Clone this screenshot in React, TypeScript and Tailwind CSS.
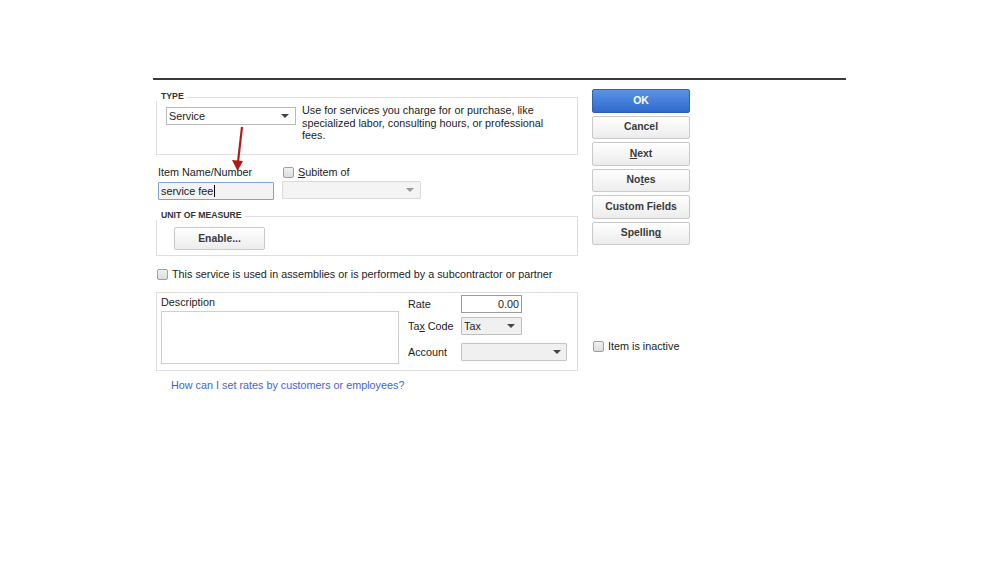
import React from "react";

const FONT = "font-['Liberation_Sans',Arial,sans-serif]";

function Checkbox() {
  return (
    <span className="inline-block h-[11px] w-[11px] shrink-0 rounded-[2px] border border-[#a0a0a0] bg-gradient-to-b from-[#f2f2f2] to-[#dcdcdc]" />
  );
}

function Caret({ color = "#444" }: { color?: string }) {
  return (
    <svg width="8" height="4" viewBox="0 0 8 4" className="shrink-0">
      <path d="M0 0 L8 0 L4 4 Z" fill={color} />
    </svg>
  );
}

function Button({
  children,
  primary,
}: {
  children: React.ReactNode;
  primary?: boolean;
}) {
  return (
    <div
      className={
        primary
          ? "flex h-[23.5px] w-[98px] items-center justify-center rounded-[2px] border border-[#2f5fb3] bg-gradient-to-b from-[#5b93e6] to-[#2f6acb] text-[10.4px] font-bold text-white"
          : "flex h-[23.5px] w-[98px] items-center justify-center rounded-[2px] border border-[#c9c9c9] bg-gradient-to-b from-[#ffffff] to-[#ececec] text-[10.4px] font-bold text-[#3a3a3a]"
      }
    >
      {children}
    </div>
  );
}

export default function App() {
  return (
    <div className={`relative h-[562px] w-[999px] bg-white text-[10.8px] text-[#222] ${FONT}`}>
      <div className="pl-[153px] pt-[78px]">
        <div className="h-[2px] w-[693px] bg-[#3a3a3a]" />

        <div className="flex">
          {/* left column */}
          <div className="ml-[3px] w-[422px]">
            {/* TYPE */}
            <div className="relative mt-[17px] h-[58px] border border-[#dedede] pl-[9px] pt-[9px]">
              <span className="absolute -left-[1px] -top-[7px] bg-white pl-[5px] pr-[3px] text-[8.7px] font-bold leading-[10px] text-[#333]">
                TYPE
              </span>
              <div className="flex">
                <div className="flex h-[18px] w-[130px] items-center justify-between border border-[#b9b9b9] bg-white pl-[2px] pr-[6px] leading-none">
                  <span>Service</span>
                  <Caret />
                </div>
                <p className="ml-[6px] mt-[-3px] leading-[12.5px]">
                  Use for services you charge for or purchase, like
                  <br />
                  specialized labor, consulting hours, or professional
                  <br />
                  fees.
                </p>
              </div>
            </div>

            {/* Item name / subitem */}
            <div className="ml-[2px] mt-[10px] flex gap-[8px]">
              <div className="w-[116px]">
                <div className="h-[14px] leading-[14px]">Item Name/Number</div>
                <div className="mt-[3px] flex h-[18px] items-center rounded-[1px] border border-[#7ea3d6] bg-[#f3f3f3] pl-[2px] leading-none">
                  <span>service fee</span>
                  <span className="ml-[1px] inline-block h-[12px] w-[1px] bg-black" />
                </div>
              </div>
              <div>
                <div className="flex h-[14px] items-center gap-[4px] pl-[1px] leading-[14px]">
                  <Checkbox />
                  <span>
                    <span className="underline">S</span>ubitem of
                  </span>
                </div>
                <div className="mt-[2px] flex h-[18px] w-[139px] items-center justify-end rounded-[1px] border border-[#dadada] bg-[#f4f4f4] pr-[6px]">
                  <Caret color="#9a9a9a" />
                </div>
              </div>
            </div>

            {/* UNIT OF MEASURE */}
            <div className="relative mt-[16px] h-[40px] border border-[#dedede] pl-[17px] pt-[10px]">
              <span className="absolute -left-[1px] -top-[7px] bg-white pl-[5px] pr-[3px] text-[8.7px] font-bold leading-[10px] text-[#333]">
                UNIT OF MEASURE
              </span>
              <div className="flex h-[23px] w-[91px] items-center justify-center rounded-[2px] border border-[#c9c9c9] bg-gradient-to-b from-[#ffffff] to-[#ececec] text-[10.4px] font-bold text-[#3a3a3a]">
                Enable...
              </div>
            </div>

            {/* assemblies checkbox */}
            <div className="ml-[1px] mt-[11px] flex h-[14px] items-center gap-[4px] leading-[14px]">
              <Checkbox />
              <span>
                This service is used in assemblies or is performed by a
                subcontractor or partner
              </span>
            </div>

            {/* description / rate box */}
            <div className="mt-[11px] flex h-[79px] border border-[#dedede] pl-[4px] pt-[2px]">
              <div className="w-[238px]">
                <div className="h-[14px] leading-[14px]">Description</div>
                <div className="mt-[2px] h-[53px] border border-[#cfcfcf] bg-white" />
              </div>
              <div className="ml-[9px]">
                <div className="flex h-[18px] items-center">
                  <span className="w-[53px]">Rate</span>
                  <div className="flex h-[18px] w-[61px] items-center justify-end border border-[#9c9c9c] bg-white pr-[2px] leading-none">
                    0.00
                  </div>
                </div>
                <div className="mt-[4px] flex h-[18px] items-center">
                  <span className="w-[53px]">
                    Ta<span className="underline">x</span> Code
                  </span>
                  <div className="flex h-[18px] w-[61px] items-center justify-between rounded-[1px] border border-[#bdbdbd] bg-[#f0f0f0] pl-[2px] pr-[6px] leading-none">
                    <span>Tax</span>
                    <Caret />
                  </div>
                </div>
                <div className="mt-[8px] flex h-[18px] items-center">
                  <span className="w-[53px]">Account</span>
                  <div className="flex h-[18px] w-[106px] items-center justify-end rounded-[1px] border border-[#c4c4c4] bg-[#f0f0f0] pr-[5px]">
                    <Caret />
                  </div>
                </div>
              </div>
            </div>

            <div className="ml-[15px] mt-[7px] h-[14px] leading-[14px] text-[#3f66c8]">
              How can I set rates by customers or employees?
            </div>
          </div>

          {/* right column */}
          <div className="ml-[14px] mt-[9px]">
            <div className="flex flex-col gap-[3px]">
              <Button primary>OK</Button>
              <Button>Cancel</Button>
              <Button>
                <span>
                  <span className="underline">N</span>ext
                </span>
              </Button>
              <Button>
                <span>
                  No<span className="underline">t</span>es
                </span>
              </Button>
              <Button>Custom Fields</Button>
              <Button>
                <span>
                  Spellin<span className="underline">g</span>
                </span>
              </Button>
            </div>
            <div className="ml-[1px] mt-[94px] flex h-[14px] items-center gap-[4px] leading-[14px]">
              <Checkbox />
              <span>Item is inactive</span>
            </div>
          </div>
        </div>
      </div>

      {/* red annotation arrow */}
      <svg
        className="absolute left-[228px] top-[124px]"
        width="22"
        height="50"
        viewBox="0 0 22 50"
      >
        <line x1="14" y1="3" x2="10" y2="38" stroke="#b11a1a" strokeWidth="2.2" />
        <path d="M4 36 L9.5 47 L15 37 Z" fill="#b11a1a" />
      </svg>
    </div>
  );
}
